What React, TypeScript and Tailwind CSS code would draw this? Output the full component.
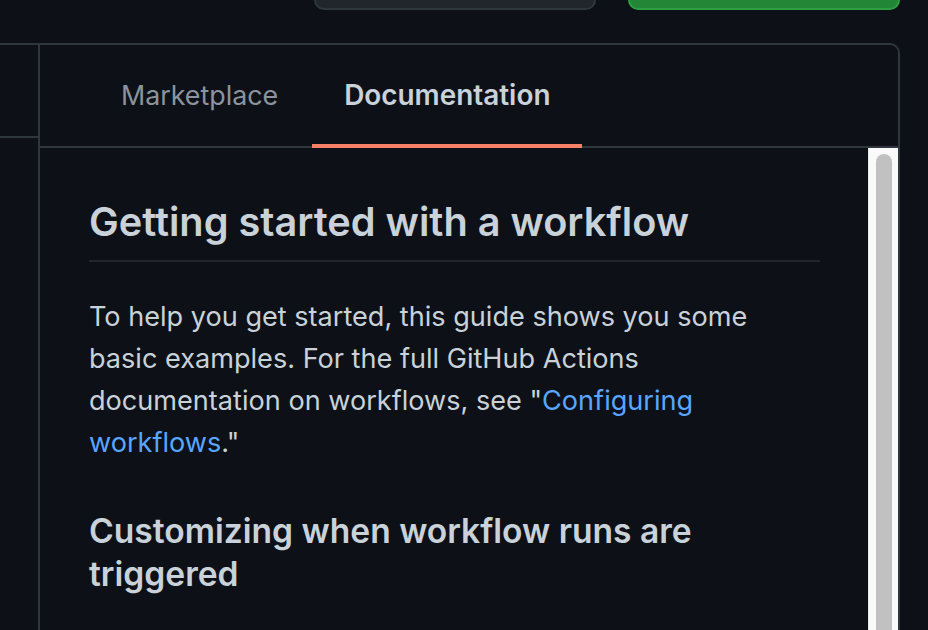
import React from "react";

export default function App() {
  return (
    <div className="w-[928px] h-[630px] overflow-hidden bg-[#0d1117] flex flex-col font-['Inter','Noto_Sans',sans-serif] text-[#c9d1d9]">
      <div className="h-[43px] flex items-start shrink-0">
        <div className="ml-[314px] w-[282px] h-[60px] -mt-[50px] rounded-[10px] bg-[#21262d] border-2 border-[#30363d]" />
        <div className="ml-[32px] w-[272px] h-[60px] -mt-[50px] rounded-[10px] bg-[#238636] border-2 border-[#2ea043]" />
      </div>
      <div className="flex-1 min-h-0 flex w-[900px] border-t-2 border-r-2 border-[#30363d] rounded-tr-[10px]">
        <div className="w-[40px] shrink-0 border-r-2 border-[#30363d] flex flex-col">
          <div className="h-[93px] border-b-2 border-[#30363d]" />
        </div>
        <div className="flex-1 min-w-0 flex flex-col">
          <div className="h-[103px] shrink-0 border-b-2 border-[#30363d] flex pl-[49px] gap-[2px]">
            <div className="px-[32px] flex items-center text-[26.8px] text-[#8b949e]">Marketplace</div>
            <div className="relative px-[32px] flex items-center text-[27.9px] font-semibold text-[#c9d1d9]">
              Documentation
              <div className="absolute left-0 right-0 -bottom-[2px] h-[4px] bg-[#f78166]" />
            </div>
          </div>
          <div className="flex-1 min-h-0 flex">
            <div className="flex-1 min-w-0 pl-[49px] pr-[48px] pt-[49px] overflow-hidden">
              <h1 className="text-[39.7px] font-semibold leading-[51px] pb-[12px] border-b-2 border-[#21262d] text-[#c9d1d9]">
                Getting started with a workflow
              </h1>
              <p className="mt-[34px] text-[27.1px] leading-[42px] text-[#c9d1d9]">
                To help you get started, this guide shows you some basic examples. For the full GitHub Actions documentation on workflows, see "<span className="text-[#58a6ff]">Configuring workflows</span>."
              </p>
              <h2 className="mt-[45px] text-[33.6px] font-semibold leading-[43px] text-[#c9d1d9]">
                Customizing when workflow runs are triggered
              </h2>
            </div>
            <div className="w-[30px] shrink-0 bg-[#fafafa] border-l border-[#e8e8e8] pl-[7px] pt-[6px]">
              <div className="w-[16px] h-[600px] rounded-full bg-[#c1c1c1]" />
            </div>
          </div>
        </div>
      </div>
    </div>
  );
}
